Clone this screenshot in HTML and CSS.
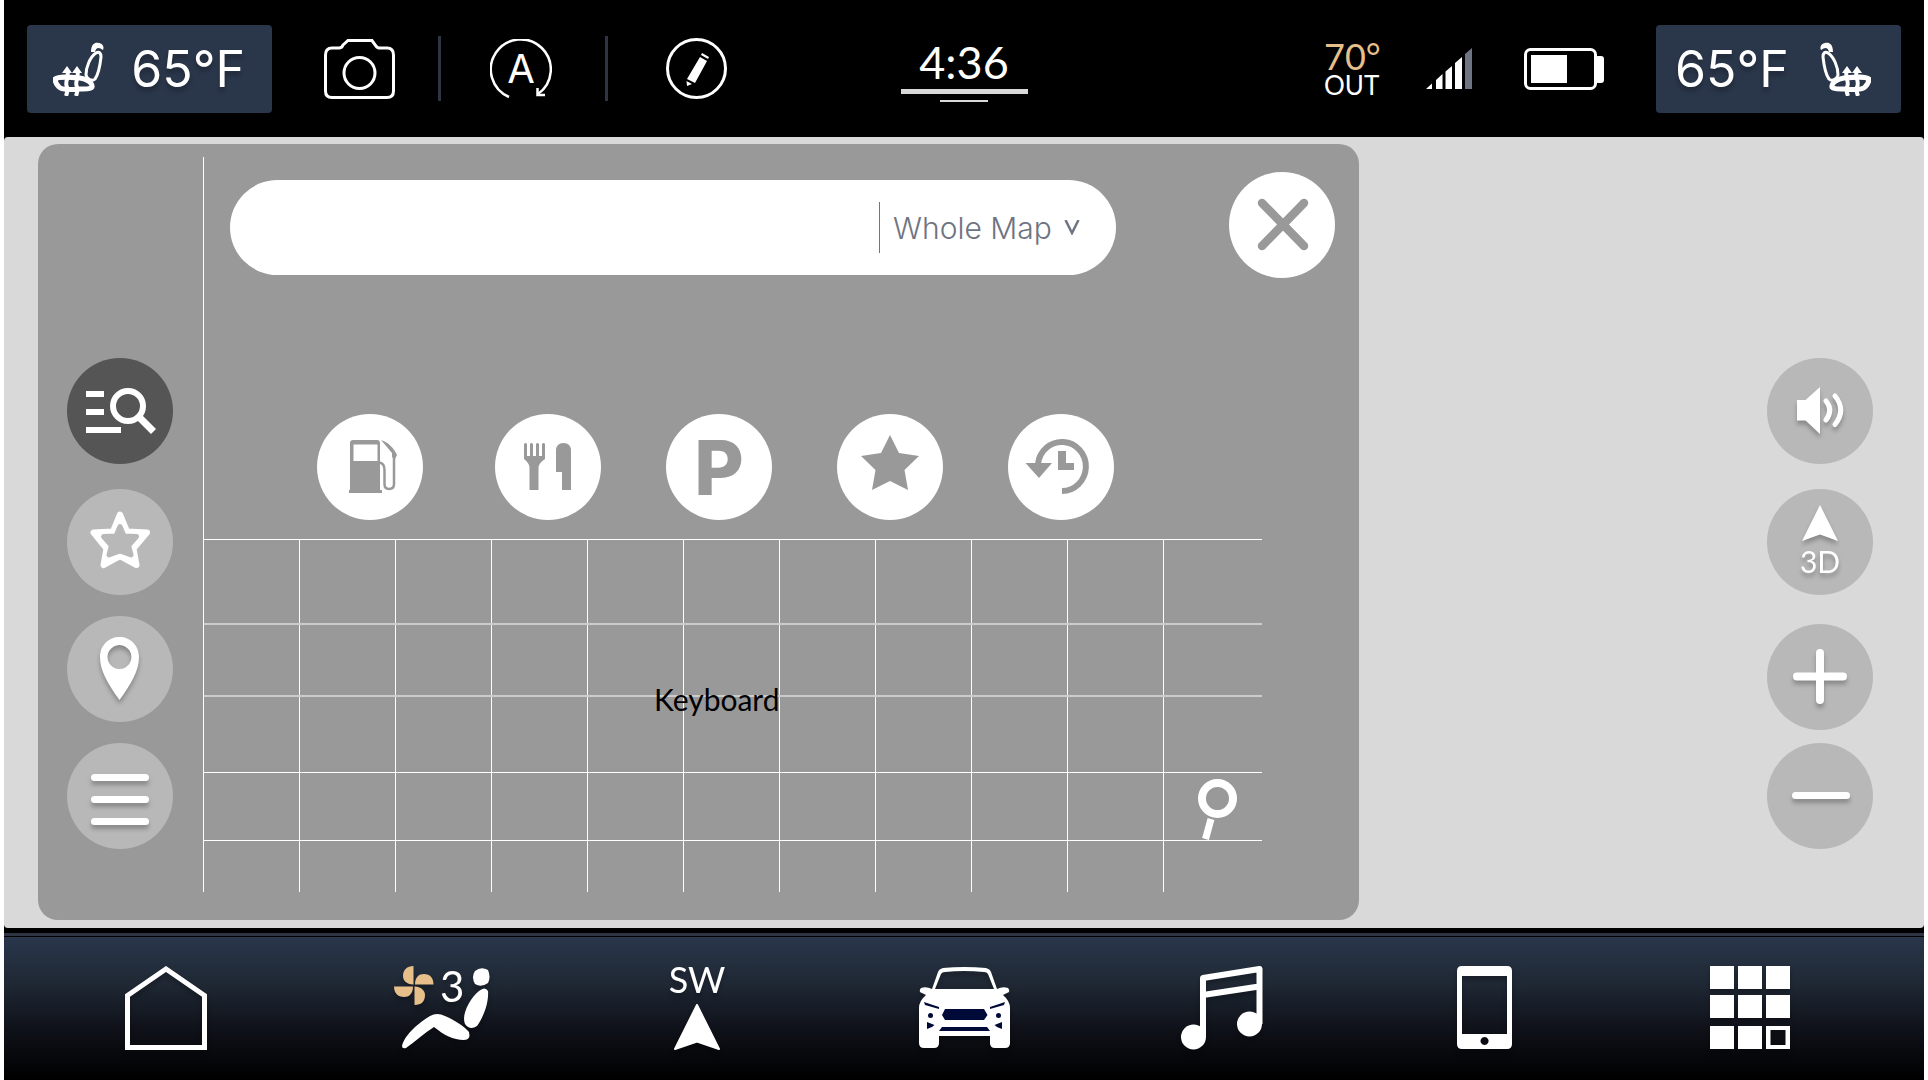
FILE: index.html
```html
<!DOCTYPE html>
<html lang="en">
<head>
  <meta charset="UTF-8" />
  <meta name="viewport" content="width=device-width, initial-scale=1.0" />
  <title>Navigation Search</title>
  <link rel="stylesheet" href="styles.css">
</head>
<body>
  <header class="status-bar">
    <div class="status-left">
      <button class="seat" aria-label="Driver seat heat">
        <svg class="seat-icon" width="51" height="54" viewBox="0 0 51 54" fill="none" stroke="#fff">
          <path d="M38 10C38 2 42 0 46 1C51 2 51 6 50 8C46 5 43 5 42 10Z" fill="#fff" stroke="none" />
          <path d="M43 11C46 9 48 11 48 15C47 24 45 33 42 37C39 40 34 37 33 33C33 25 37 15 43 11Z" stroke-width="3" />
          <path d="M2 37C6 34 16 35 27 36C34 37 39 41 39 44C40 47 33 47 27 47C20 48 9 48 6 45C3 42 2 40 2 37Z" stroke-width="5" />
          <path d="M14 28C17 34 11 40 14 45Q15 49 13 54M24 28C27 34 21 40 24 45Q25 49 23 54" stroke-width="4" />
          <path d="M9 31L14 24L19 31ZM19 31L24 24L29 31Z" fill="#fff" stroke="none" />
        </svg>
        <span>65°F</span>
      </button>
      <button aria-label="Camera">
        <svg width="71" height="60" viewBox="0 0 71 60" fill="none" stroke="#fff" stroke-width="3">
          <path d="M8 9H15Q18 9 19 6L24 1.500H48L52 7Q53 9 56 9H63Q69.500 9 69.500 16V52Q69.500 58.500 63 58.500H8Q1.500 58.500 1.500 52V16Q1.500 9 8 9Z" />
          <circle cx="35.500" cy="34" r="15.500" />
        </svg>
      </button>
      <span class="divider"></span>
      <button aria-label="Auto start stop">
        <svg width="62" height="60" viewBox="0 0 62 60" fill="none" stroke="#fff" stroke-width="2.500">
          <path d="M19 58A30 30 0 1 1 48 55" />
          <path d="M47.500 49V56H55" />
          <text class="auto-letter" x="31" y="44" text-anchor="middle">A</text>
        </svg>
      </button>
      <span class="divider"></span>
      <button aria-label="Edit">
        <svg width="61" height="61" viewBox="0 0 61 61">
          <circle cx="30.500" cy="30.500" r="29" fill="none" stroke="#fff" stroke-width="3" />
          <path d="M36 15L43 19L42 21L35 17ZM34 19L41 23L29 45L21 41ZM20.500 43L26 46L21 48Z" fill="#fff" />
        </svg>
      </button>
    </div>

    <div class="clock">
      <time>4:36</time>
      <span class="clock-bar"></span>
      <span class="clock-bar-small"></span>
    </div>

    <div class="status-right">
      <div class="outside">
        <span class="outside-temp">70°</span>
        <span>OUT</span>
      </div>
      <svg width="46" height="41" viewBox="0 0 46 41" fill="#fff">
        <path d="M0 41L6 35.500V41ZM10 32L16.500 26V41H10ZM19.500 23.500L26 18V41H19.500ZM29 15L36 9V41H29Z" />
        <path d="M39 6L46 0V41H39Z" fill="#6f7482" />
      </svg>
      <svg width="80" height="42" viewBox="0 0 80 42" fill="#fff">
        <rect x="1.500" y="1.500" width="70" height="39" rx="5" fill="none" stroke="#fff" stroke-width="3" />
        <rect x="7" y="7" width="36" height="28" />
        <rect x="71" y="8" width="9" height="27" rx="3" />
      </svg>
      <button class="seat seat-right" aria-label="Passenger seat heat">
        <span>65°F</span>
        <svg class="seat-icon" width="51" height="54" viewBox="0 0 51 54" fill="none" stroke="#fff">
          <path d="M38 10C38 2 42 0 46 1C51 2 51 6 50 8C46 5 43 5 42 10Z" fill="#fff" stroke="none" />
          <path d="M43 11C46 9 48 11 48 15C47 24 45 33 42 37C39 40 34 37 33 33C33 25 37 15 43 11Z" stroke-width="3" />
          <path d="M2 37C6 34 16 35 27 36C34 37 39 41 39 44C40 47 33 47 27 47C20 48 9 48 6 45C3 42 2 40 2 37Z" stroke-width="5" />
          <path d="M14 28C17 34 11 40 14 45Q15 49 13 54M24 28C27 34 21 40 24 45Q25 49 23 54" stroke-width="4" />
          <path d="M9 31L14 24L19 31ZM19 31L24 24L29 31Z" fill="#fff" stroke="none" />
        </svg>
      </button>
    </div>
  </header>

  <main>
    <section class="panel">
      <nav class="side-menu">
        <button class="round active" aria-label="Search">
          <svg viewBox="0 0 106 106" fill="#fff">
            <path d="M19 33H37V39H19ZM19 51H37V57H19ZM19 69H54V75H19Z" />
            <circle cx="61" cy="48" r="15" fill="none" stroke="#fff" stroke-width="6" />
            <path d="M72 59L86.500 73.500" stroke="#fff" stroke-width="7" />
          </svg>
        </button>
        <button class="round" aria-label="Favorites">
          <svg viewBox="0 0 106 106" stroke-width="6" stroke-linejoin="round">
            <path d="M53 25.500L60 42.500L80 43.500L66.500 59.500L69.500 76L53 67L36.500 76L39.500 59.500L26.500 43.500L46 42.500Z" fill="#fff" stroke="#fff" />
            <path d="M53 37.500L57 47L69.500 47.500L61.500 56.500L64 66L53 62L42 66L44.500 56.500L36.500 47.500L49 47Z" fill="#b8b8b8" stroke="#b8b8b8" stroke-width="5" />
          </svg>
        </button>
        <button class="round shadow" aria-label="Places">
          <svg viewBox="0 0 106 106" fill="#fff">
            <path fill-rule="evenodd" d="M52.500 21C42 21 33 29 33 41C33 55 41 68 52.500 84C64 68 72 55 72 41C72 29 63 21 52.500 21ZM52.500 29A12 12 0 1 1 52.400 29Z" />
          </svg>
        </button>
        <button class="round shadow" aria-label="Menu">
          <svg viewBox="0 0 106 106" stroke="#fff" stroke-width="7" stroke-linecap="round">
            <path d="M27.500 34.500H78.500M27.500 56.500H78.500M27.500 78.500H78.500" />
          </svg>
        </button>
      </nav>

      <div class="panel-body">
        <div class="search-row">
          <form class="search-box">
            <input type="search" aria-label="Search the map" />
            <div class="scope">
              <select aria-label="Search area">
                <option>Whole Map</option>
              </select>
              <svg width="16" height="15" viewBox="0 0 16 15" fill="none" stroke="#6f7482" stroke-width="2.500">
                <path d="M1.500 0L8 13L14.500 0" />
              </svg>
            </div>
          </form>
          <button class="round light" aria-label="Close">
            <svg viewBox="0 0 106 106" stroke="#999" stroke-width="8.500" stroke-linecap="round">
              <path d="M33 31L75 74M75 31L33 74" />
            </svg>
          </button>
        </div>

        <div class="categories">
          <button class="round light" aria-label="Fuel">
            <svg viewBox="0 0 106 106" fill="#999">
              <path fill-rule="evenodd" d="M33 29Q33 26 36 26H60Q63 26 63 29V76H65V79H32V76H33ZM36.500 30.500V47H60.500V30.500Z" />
              <path d="M62 48.500Q67.500 49 67.500 56V70Q67.500 75 72 75Q77 75 77 70V42" fill="none" stroke="#999" stroke-width="2.500" />
              <path d="M64 26C71 28 77 34 80 41L78 45L75 43V39Z" />
            </svg>
          </button>
          <button class="round light" aria-label="Food">
            <svg viewBox="0 0 106 106" fill="#999">
              <path d="M29 30Q30.500 28 32 30V42H35V30Q36.500 28 38 30V42H41V30Q42.500 28 44 30V42H47V30Q48.500 28 50 30V45Q44 49 43.500 53V76H34.500V53Q34 49 29 45Z" />
              <path d="M61 37Q61 29 68.500 29Q76 29 76 37V76H67V58H61Z" />
            </svg>
          </button>
          <button class="round light parking" aria-label="Parking">P</button>
          <button class="round light" aria-label="Saved places">
            <svg viewBox="0 0 106 106" fill="#999">
              <path d="M53 21L62 39L82 42L67.500 56L71 76L53 67L35 76L38.500 56L24 42L44 39Z" />
            </svg>
          </button>
          <button class="round light" aria-label="Recent">
            <svg viewBox="0 0 106 106" fill="#999">
              <path d="M30 50A24 24.500 0 1 1 54 77" fill="none" stroke="#999" stroke-width="6" />
              <path d="M17.500 49H44L31 64ZM50 37H58V49H66V56H50Z" />
            </svg>
          </button>
        </div>

        <div class="keyboard">
          <div class="key-row"><i></i><i></i><i></i><i></i><i></i><i></i><i></i><i></i><i></i><i></i><i></i></div>
          <div class="key-row soft"><i></i><i></i><i></i><i></i><i></i><i></i><i></i><i></i><i></i><i></i><i></i></div>
          <div class="key-row soft"><i></i><i></i><i></i><i></i><i></i><i></i><i></i><i></i><i></i><i></i><i></i></div>
          <div class="key-row">
            <i></i><i></i><i></i><i></i><i></i><i></i><i></i><i></i><i></i><i></i>
            <button class="search-key" aria-label="Search">
              <svg width="40" height="61" viewBox="0 0 40 61" fill="none" stroke="#fff">
                <circle cx="19.500" cy="19.500" r="15.500" stroke-width="8" />
                <path d="M13 40L7.500 60" stroke-width="7" />
              </svg>
            </button>
          </div>
          <div class="key-row"><i></i><i></i><i></i><i></i><i></i><i></i><i></i><i></i><i></i><i></i><i></i></div>
          <span class="keyboard-label">Keyboard</span>
        </div>
      </div>
    </section>

    <aside class="map-controls">
      <button class="round shadow" aria-label="Volume">
        <svg viewBox="0 0 106 106" fill="none" stroke="#fff" stroke-width="5" stroke-linecap="round">
          <path d="M30 42H38.500L53 29V76L38.500 62.500H30Z" fill="#fff" stroke="none" />
          <path d="M59 43Q66.500 52 59 62M68 38Q79.500 52 68 66.500" />
        </svg>
      </button>
      <button class="round shadow view-3d">
        <svg width="36" height="37" viewBox="0 0 36 37" fill="#fff">
          <path d="M18 0L36 36L18 29.500L0 36Z" />
        </svg>
        <span>3D</span>
      </button>
      <button class="round shadow" aria-label="Zoom in">
        <svg viewBox="0 0 106 106" fill="none" stroke="#fff" stroke-width="8" stroke-linecap="round">
          <path d="M53 29V76M30 52.500H76" />
          <path d="M53 47L58.500 52.500L53 58L47.500 52.500Z" fill="#fff" stroke-width="2" />
        </svg>
      </button>
      <button class="round shadow" aria-label="Zoom out">
        <svg viewBox="0 0 106 106" stroke="#fff" stroke-width="7" stroke-linecap="round">
          <path d="M28.500 52.500H79.500" />
        </svg>
      </button>
    </aside>
  </main>

  <footer>
    <nav class="dock">
      <a href="#" aria-label="Home">
        <svg width="82" height="84" viewBox="0 0 82 84" fill="none" stroke="#fff" stroke-width="5">
          <path d="M2.500 29.500L41 3L79.500 29.500V81.500H2.500Z" />
        </svg>
      </a>
      <a href="#" aria-label="Climate">
        <svg class="climate-icon" width="96" height="84" viewBox="0 0 96 84" fill="#fff">
          <path d="M19.500 0V18.500C12 18.500 9 14 9 10C9 4 13 0 19.500 0ZM21 18.500C21 11 25 8 30 8C36 8 39.500 12 39.500 18.500ZM20.500 20.500C28 21 31 25 31 29C31 35 28 39 20.500 39ZM19 20.500C19 28 15 31 10 31C4 31 0 27 0 20.500Z" fill="#e6bf8b" />
          <text class="fan-speed" x="46" y="36">3</text>
          <path d="M81 5Q87 0 94 4Q97 11 94 17Q87 22 81 18Q77 11 81 5Z" />
          <path d="M85 25Q91 20 94 25C95 37 89 52 83 60Q76 65 71 58C67 49 76 32 85 25Z" />
          <path d="M8 80C11 68 26 56 36 50Q43 46 51 50C60 54 70 60 75 66Q77 74 70 74C59 74 50 69 40 61C30 67 21 76 12 82Q8 83 8 80Z" />
        </svg>
      </a>
      <a href="#" class="compass" aria-label="Navigation">
        <span>SW</span>
        <svg width="46" height="46" viewBox="0 0 46 46" fill="#fff" stroke="#fff" stroke-width="2" stroke-linejoin="round">
          <path d="M23 1L45 45L23 37.500L1 45Z" />
        </svg>
      </a>
      <a href="#" aria-label="Vehicle">
        <svg width="91" height="81" viewBox="0 0 91 81" fill="#fff">
          <path fill-rule="evenodd" d="M13 22L19 5Q20 2 24 1Q45 -1 67 1Q71 2 72 5L78 22Q84 19 89 21Q92 25 88 26L84 28Q91 34 91 41V76Q91 81 86 81H76Q71 81 71 76V69H20V76Q20 81 15 81H5Q0 81 0 76V41Q0 34 7 28L3 26Q-1 25 2 21Q7 19 13 22ZM22 7L16 22H75L69 7Q68 5 65 5Q45 3 26 5Q23 5 22 7Z" />
          <g fill="#000a38">
            <path d="M26 42H65L68.500 48L65 53H26L23 48ZM23 60H68L71 64H20ZM5 35L20 40V42L6 38ZM86 35L71 40V42L85 38ZM8 55L15.500 58L13 60L8 62ZM83 55L75.500 58L78 60L83 62Z" />
            <circle cx="11.500" cy="48.500" r="2.500" />
            <circle cx="79.500" cy="48.500" r="2.500" />
          </g>
        </svg>
      </a>
      <a href="#" aria-label="Media">
        <svg width="82" height="84" viewBox="0 0 82 84" fill="none" stroke="#fff" stroke-width="6">
          <path d="M22 71V12L78.500 3V58M22 29L78 20.500" stroke-linejoin="round" />
          <circle cx="12.500" cy="71" r="12.500" fill="#fff" stroke="none" />
          <circle cx="68.500" cy="58" r="12.500" fill="#fff" stroke="none" />
        </svg>
      </a>
      <a href="#" aria-label="Phone">
        <svg width="55" height="83" viewBox="0 0 55 83" fill="#fff">
          <path fill-rule="evenodd" d="M5 0H50Q55 0 55 5V78Q55 83 50 83H5Q0 83 0 78V5Q0 0 5 0ZM5 10V68H50V10ZM27.500 71A4 4 0 1 0 27.600 71Z" />
        </svg>
      </a>
      <a href="#" aria-label="Apps">
        <svg width="80" height="83" viewBox="0 0 80 83" fill="#fff">
          <path fill-rule="evenodd" d="M0 0H24V23H0ZM28 0H52V23H28ZM56 0H80V23H56ZM0 29H24V52H0ZM28 29H52V52H28ZM56 29H80V52H56ZM0 60H24V83H0ZM28 60H52V83H28ZM56 60H80V83H56ZM60.500 64V79H75.500V64Z" />
        </svg>
      </a>
    </nav>
  </footer>
</body>
</html>
```

FILE: styles.css
```css
* {
  box-sizing: border-box;
}

body {
  margin: 0;
  padding: 0 4px;
  font-family: Lato, "Liberation Sans", sans-serif;
  background: #fff;
  display: flex;
  flex-direction: column;
  min-height: 100vh;
}

button {
  padding: 0;
  border: none;
  background: none;
  color: #fff;
  font-family: inherit;
  cursor: pointer;
}

svg {
  display: block;
}

/* top bar */
.status-bar {
  height: 137px;
  padding: 0 23px;
  background: #000;
  color: #fff;
  display: grid;
  grid-template-columns: 1fr auto 1fr;
  align-items: center;
}

.status-left,
.status-right {
  display: grid;
  align-items: center;
}

.status-left {
  grid-template-columns: 297px 114px 52px 115px 61px 61px;
}

.status-right {
  grid-template-columns: 102px 98px 132px 245px;
  justify-content: end;
}

.seat {
  width: 245px;
  height: 88px;
  padding: 0 27px 0 26px;
  border-radius: 4px;
  background: #2a364a;
  display: flex;
  align-items: center;
  justify-content: space-between;
  font-family: Inter, sans-serif;
  font-weight: 400;
  font-size: 50px;
  text-shadow: 0 4px 4px rgba(0, 0, 0, 0.25);
}

.seat-right {
  padding: 0 30px 0 19px;
}

.seat-right .seat-icon {
  transform: scaleX(-1);
}

.divider {
  width: 3px;
  height: 65px;
  background: #2f3442;
}

.auto-letter {
  font-family: Inter, sans-serif;
  font-weight: 400;
  font-size: 40px;
  fill: #fff;
  stroke: none;
}

.clock {
  width: 127px;
  padding-top: 4px;
  display: flex;
  flex-direction: column;
  align-items: center;
}

.clock time {
  font-size: 45px;
  line-height: 44px;
}

.clock-bar {
  width: 100%;
  height: 5px;
  margin: 5px 0 6px;
  background: #d9d9d9;
}

.clock-bar-small {
  width: 48px;
  height: 2px;
  background: #d9d9d9;
}

.outside {
  display: flex;
  flex-direction: column;
  font-size: 26px;
  line-height: 26px;
}

.outside-temp {
  font-size: 36px;
  line-height: 32px;
  color: #e6bf8b;
}

/* map area */
main {
  flex: 1;
  padding: 7px 0 8px 34px;
  background: #d9d9d9;
  border-radius: 4px;
  box-shadow: 0 0 0 4px #000;
  clip-path: inset(0);
  display: grid;
  grid-template-columns: 1321fr 565fr;
}

.panel {
  padding: 13px 0 28px;
  border-radius: 20px;
  background: #999;
  display: flex;
}

.round {
  width: 106px;
  height: 106px;
  border-radius: 50%;
  background: #b8b8b8;
}

.active {
  background: #555;
}

.light {
  background: #fff;
  color: #999;
}

.shadow svg,
.shadow span {
  filter: drop-shadow(0 4px 2px rgba(0, 0, 0, 0.25));
}

.side-menu {
  width: 166px;
  padding: 201px 0 0 29px;
  border-right: 1px solid #fff;
  display: grid;
  grid-template-rows: 131px 127px 127px 106px;
  align-content: start;
}

.panel-body {
  flex: 1;
  padding-top: 15px;
  display: flex;
  flex-direction: column;
}

.search-row {
  padding: 0 24px 0 26px;
  display: flex;
  justify-content: space-between;
  align-items: flex-start;
  gap: 113px;
}

.search-box {
  flex: 1;
  height: 95px;
  margin-top: 8px;
  padding: 0 36px 0 48px;
  border-radius: 48px;
  background: #fff;
  display: flex;
  align-items: center;
}

.search-box input {
  flex: 1;
  min-width: 0;
  height: 60px;
  border: none;
  outline: none;
  background: none;
  font: 30px Inter, sans-serif;
}

.scope {
  height: 51px;
  padding-left: 13px;
  border-left: 1px solid #6f7482;
  display: flex;
  align-items: center;
  gap: 12px;
}

.scope select {
  appearance: none;
  padding: 0;
  border: none;
  background: none;
  color: #6f7482;
  font: 300 30px Inter, sans-serif;
}

.categories {
  margin: 136px 245px 19px 113px;
  display: grid;
  grid-template-columns: 178fr repeat(3, 171fr) 106fr;
}

.parking {
  font-family: Inter, sans-serif;
  font-weight: 800;
  font-size: 76px;
  line-height: 104px;
}

/* keyboard */
.keyboard {
  position: relative;
  flex: 1;
  margin-right: 97px;
  display: grid;
  grid-template-rows: 84fr 72fr 77fr 68fr 52fr;
}

.key-row {
  border-top: 1px solid #fff;
  display: grid;
  grid-template-columns: repeat(10, 96fr) 98fr;
}

.key-row.soft {
  border-top: 2px solid #ccc;
}

.key-row i {
  border-right: 1px solid #fff;
}

.key-row i:last-child {
  border-right: none;
}

.search-key {
  padding: 5px 0 0 10px;
  display: flex;
  align-items: center;
  justify-content: center;
}

.keyboard-label {
  position: absolute;
  left: 50%;
  top: 50%;
  transform: translate(-79px, -35px);
  font-size: 30px;
  line-height: 36px;
  color: #000;
}

.map-controls {
  padding: 214px 51px 0 0;
  display: grid;
  grid-template-rows: 131px 135px 119px 106px;
  align-content: start;
  justify-content: end;
}

.view-3d {
  display: flex;
  flex-direction: column;
  align-items: center;
  justify-content: center;
  font-size: 30px;
  line-height: 38px;
}

/* bottom dock */
footer {
  border-top: 5px solid #000;
  background: #2f3442;
  padding-top: 3px;
}

.dock {
  height: 144px;
  padding: 0 134px 2px 121px;
  border-top: 1px solid #000;
  background: linear-gradient(#29364b, #1f2834 33%, #10131b 62%, #000);
  display: grid;
  grid-template-columns: 269fr 276fr 249fr 262fr 276fr 253fr 80fr;
  align-items: center;
}

.dock a {
  color: #fff;
  text-decoration: none;
  filter: drop-shadow(0 4px 2px rgba(0, 0, 0, 0.25));
}

.climate-icon {
  overflow: visible;
}

.fan-speed {
  font-size: 42px;
}

.compass {
  width: 54px;
  display: flex;
  flex-direction: column;
  align-items: center;
  gap: 12px;
  font-size: 36px;
  line-height: 26px;
}
```
